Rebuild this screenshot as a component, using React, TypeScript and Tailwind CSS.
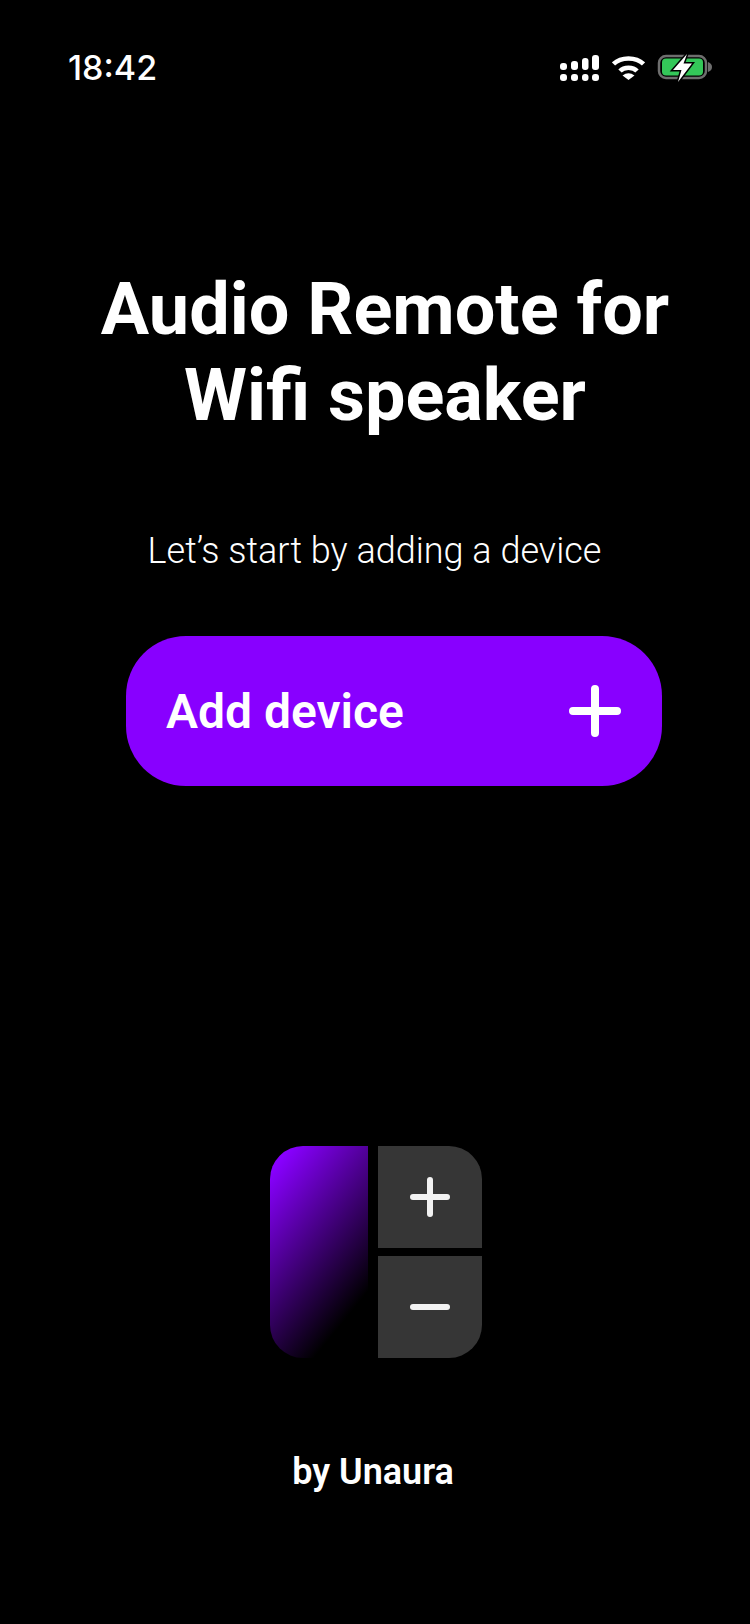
import React from "react";

const StatusIcons = () => (
  <div className="flex items-center">
    <svg width="39" height="27" viewBox="0 0 39 27" fill="#fff">
      <rect x="0" y="8" width="7" height="7" rx="3" />
      <rect x="11" y="6" width="7" height="9" rx="3" />
      <rect x="22" y="3" width="6.500" height="12" rx="3" />
      <rect x="32" y="0" width="7" height="15" rx="3" />
      <rect x="0" y="19" width="7" height="7" rx="3" />
      <rect x="11" y="19" width="7" height="7" rx="3" />
      <rect x="22" y="19" width="6.500" height="7" rx="3" />
      <rect x="32" y="19" width="7" height="7" rx="3" />
    </svg>
    <svg className="ml-[13px]" width="33" height="24" viewBox="0 0 33 24" fill="none" stroke="#fff" strokeWidth="4.500">
      <path d="M1.500 8C9 0.500 24 0.500 31.500 8" />
      <path d="M8 15C12 10.500 21 10.500 25 15" />
      <path d="M10.500 19.500Q16.500 15 22.500 19.500L16.500 24Z" fill="#fff" stroke="none" />
    </svg>
    <svg className="ml-[12px]" width="56" height="36" viewBox="0 0 56 36">
      <rect x="2" y="6" width="47" height="22" rx="7" fill="none" stroke="#6e6e6e" strokeWidth="2.500" />
      <rect x="5" y="8.500" width="41" height="17" rx="4" fill="#34c759" />
      <path d="M51 12C54 13 55 15 55 17C55 19 54 21 51 22Z" fill="#6e6e6e" />
      <path d="M30 4L16 20H24.500L21 32L35 13.500H26.500Z" fill="#fff" stroke="#000" strokeWidth="3" paintOrder="stroke" />
    </svg>
  </div>
);

const PlusIcon = ({ size, thick }: { size: number; thick: number }) => (
  <svg width={size} height={size} viewBox={`0 0 ${size} ${size}`} stroke="currentColor" strokeWidth={thick} strokeLinecap="round">
    <path d={`M${thick / 2} ${size / 2}H${size - thick / 2}M${size / 2} ${thick / 2}V${size - thick / 2}`} />
  </svg>
);

const AppLogo = () => (
  <div className="flex gap-[10px] h-[212px] w-[212px]">
    <div className="w-[98px] rounded-l-[33px] bg-[linear-gradient(129deg,#8800ff_8%,#000000_80%)]" />
    <div className="flex flex-col justify-between w-[104px]">
      <div className="h-[102px] rounded-tr-[33px] bg-[#363636] text-[#f2f2f2] flex items-center justify-center">
        <PlusIcon size={40} thick={6} />
      </div>
      <div className="h-[102px] rounded-br-[33px] bg-[#363636] flex items-center justify-center">
        <div className="w-[40px] h-[6px] rounded-full bg-[#f2f2f2]" />
      </div>
    </div>
  </div>
);

export default function App() {
  return (
    <div className="w-[750px] h-[1624px] bg-black text-white flex flex-col items-center font-['Roboto',sans-serif] overflow-hidden">
      <div className="w-full flex items-center justify-between pt-[46px] pl-[68px] pr-[37px] h-[90px]">
        <span className="font-['Inter',sans-serif] text-[34px] font-medium leading-[40px]">18:42</span>
        <StatusIcons />
      </div>

      <h1 className="mt-[177px] ml-[20px] text-[72px] leading-[86px] font-bold text-center">
        Audio Remote for
        <br />
        Wifi speaker
      </h1>

      <p className="mt-[90px] ml-[-1px] text-[36px] leading-[44px] font-light">Let’s start by adding a device</p>

      <button className="mt-[63px] ml-[38px] w-[536px] h-[150px] rounded-[60px] bg-[#8800ff] flex items-center justify-between pl-[40px] pr-[41px]">
        <span className="pt-[2px] text-[48px] font-semibold">Add device</span>
        <PlusIcon size={52} thick={8} />
      </button>

      <div className="mt-[360px] ml-[2px]">
        <AppLogo />
      </div>

      <p className="mt-[94px] ml-[-4px] text-[36px] leading-[40px] font-semibold">by Unaura</p>
    </div>
  );
}
